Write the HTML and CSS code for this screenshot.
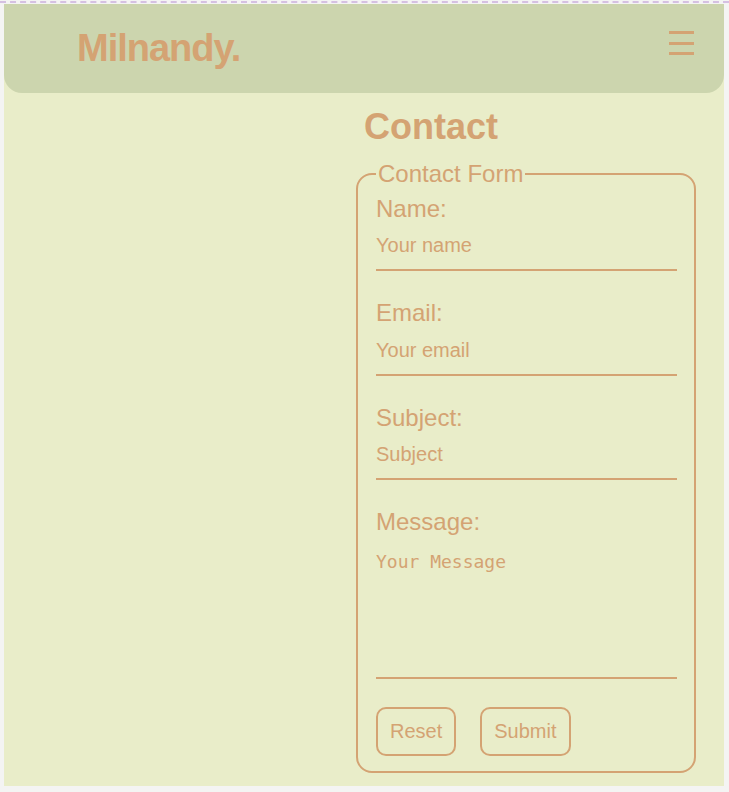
FILE: index.html
```html
<!DOCTYPE html>
<html lang="en">
<head>
<meta charset="utf-8">
<title>Milnandy. - Contact</title>
<link rel="stylesheet" href="styles.css">
</head>
<body>
<div class="page">
  <header class="header">
    <div class="logo">Milnandy.</div>
    <button class="menu" aria-label="Menu"><span></span><span></span><span></span></button>
  </header>
  <main class="main">
    <div class="aside"></div>
    <section class="contact">
      <h1 class="title">Contact</h1>
      <form class="form">
        <fieldset class="fieldset">
          <legend class="legend">Contact Form</legend>
          <div class="group">
            <label class="label" for="name">Name:</label>
            <input class="field" id="name" type="text" placeholder="Your name">
          </div>
          <div class="group">
            <label class="label" for="email">Email:</label>
            <input class="field" id="email" type="email" placeholder="Your email">
          </div>
          <div class="group">
            <label class="label" for="subject">Subject:</label>
            <input class="field" id="subject" type="text" placeholder="Subject">
          </div>
          <div class="group">
            <label class="label" for="message">Message:</label>
            <textarea class="area" id="message" placeholder="Your Message"></textarea>
          </div>
          <div class="actions">
            <button class="btn" type="reset">Reset</button>
            <button class="btn" type="submit">Submit</button>
          </div>
        </fieldset>
      </form>
    </section>
  </main>
</div>
</body>
</html>
```
FILE: styles.css
```css
html, body {
  margin: 0;
  padding: 0;
}
html {
  background: #f4f4f3;
  padding-top: 1px;
}
body {
  background: #f4f4f3;
  font-family: "Liberation Sans", Arial, sans-serif;
  color: #d4a373;
  border-top: 2px dashed #d5c0e2;
  height: 789px;
  overflow: hidden;
}
.page {
  width: 720px;
  margin-left: 4px;
  margin-top: 1px;
  height: 782px;
  background: #e9edc9;
}
.header {
  height: 89px;
  background: #ccd5ae;
  border-radius: 0 0 18px 18px;
  display: flex;
  justify-content: space-between;
  align-items: flex-start;
  padding: 0 30px 0 73px;
  box-sizing: border-box;
}
.logo {
  font-size: 38px;
  font-weight: bold;
  letter-spacing: -1px;
  line-height: 44px;
  margin-top: 22px;
}
.menu {
  margin-top: 27px;
  padding: 0;
  border: 0;
  background: none;
  display: flex;
  flex-direction: column;
  gap: 7.5px;
  width: 25px;
}
.menu span {
  display: block;
  width: 25px;
  height: 3px;
  background: #d4a373;
}
.main {
  display: grid;
  grid-template-columns: 350px 344px;
}
.title {
  font-size: 36px;
  font-weight: bold;
  line-height: 41px;
  margin: 13px 0 13px 10px;
}
.form {
  margin: 0;
}
.fieldset {
  margin: 0 2px;
  border: 2px solid #d4a373;
  border-radius: 16px;
  padding: 7px 17px 15px 18px;
}
.legend {
  font-size: 24px;
  padding: 0 2px;
  line-height: 27.6px;
}
.group {
  margin-bottom: 28px;
}
.label {
  display: block;
  font-size: 24px;
  line-height: 27.6px;
}
.field {
  display: block;
  width: 100%;
  box-sizing: border-box;
  font-family: "Liberation Sans", Arial, sans-serif;
  font-size: 20px;
  line-height: 23px;
  height: 49px;
  padding: 12px 0;
  border: 0;
  border-bottom: 2px solid #d4a373;
  background: transparent;
  color: #d4a373;
  outline: none;
}
.area {
  display: block;
  width: 100%;
  box-sizing: border-box;
  height: 143px;
  font-family: "DejaVu Sans Mono", monospace;
  font-size: 18px;
  line-height: 21px;
  padding: 15px 0 12px;
  border: 0;
  border-bottom: 2px solid #d4a373;
  background: transparent;
  color: #d4a373;
  resize: none;
  outline: none;
}
.field::placeholder,
.area::placeholder {
  color: #d4a373;
  opacity: 1;
}
.actions {
  display: flex;
  gap: 24px;
  margin-top: 2px;
}
.btn {
  font-family: "Liberation Sans", Arial, sans-serif;
  font-size: 20px;
  line-height: 23px;
  padding: 11px 12px;
  border: 2px solid #d4a373;
  border-radius: 10px;
  background: transparent;
  color: #d4a373;
}
```
